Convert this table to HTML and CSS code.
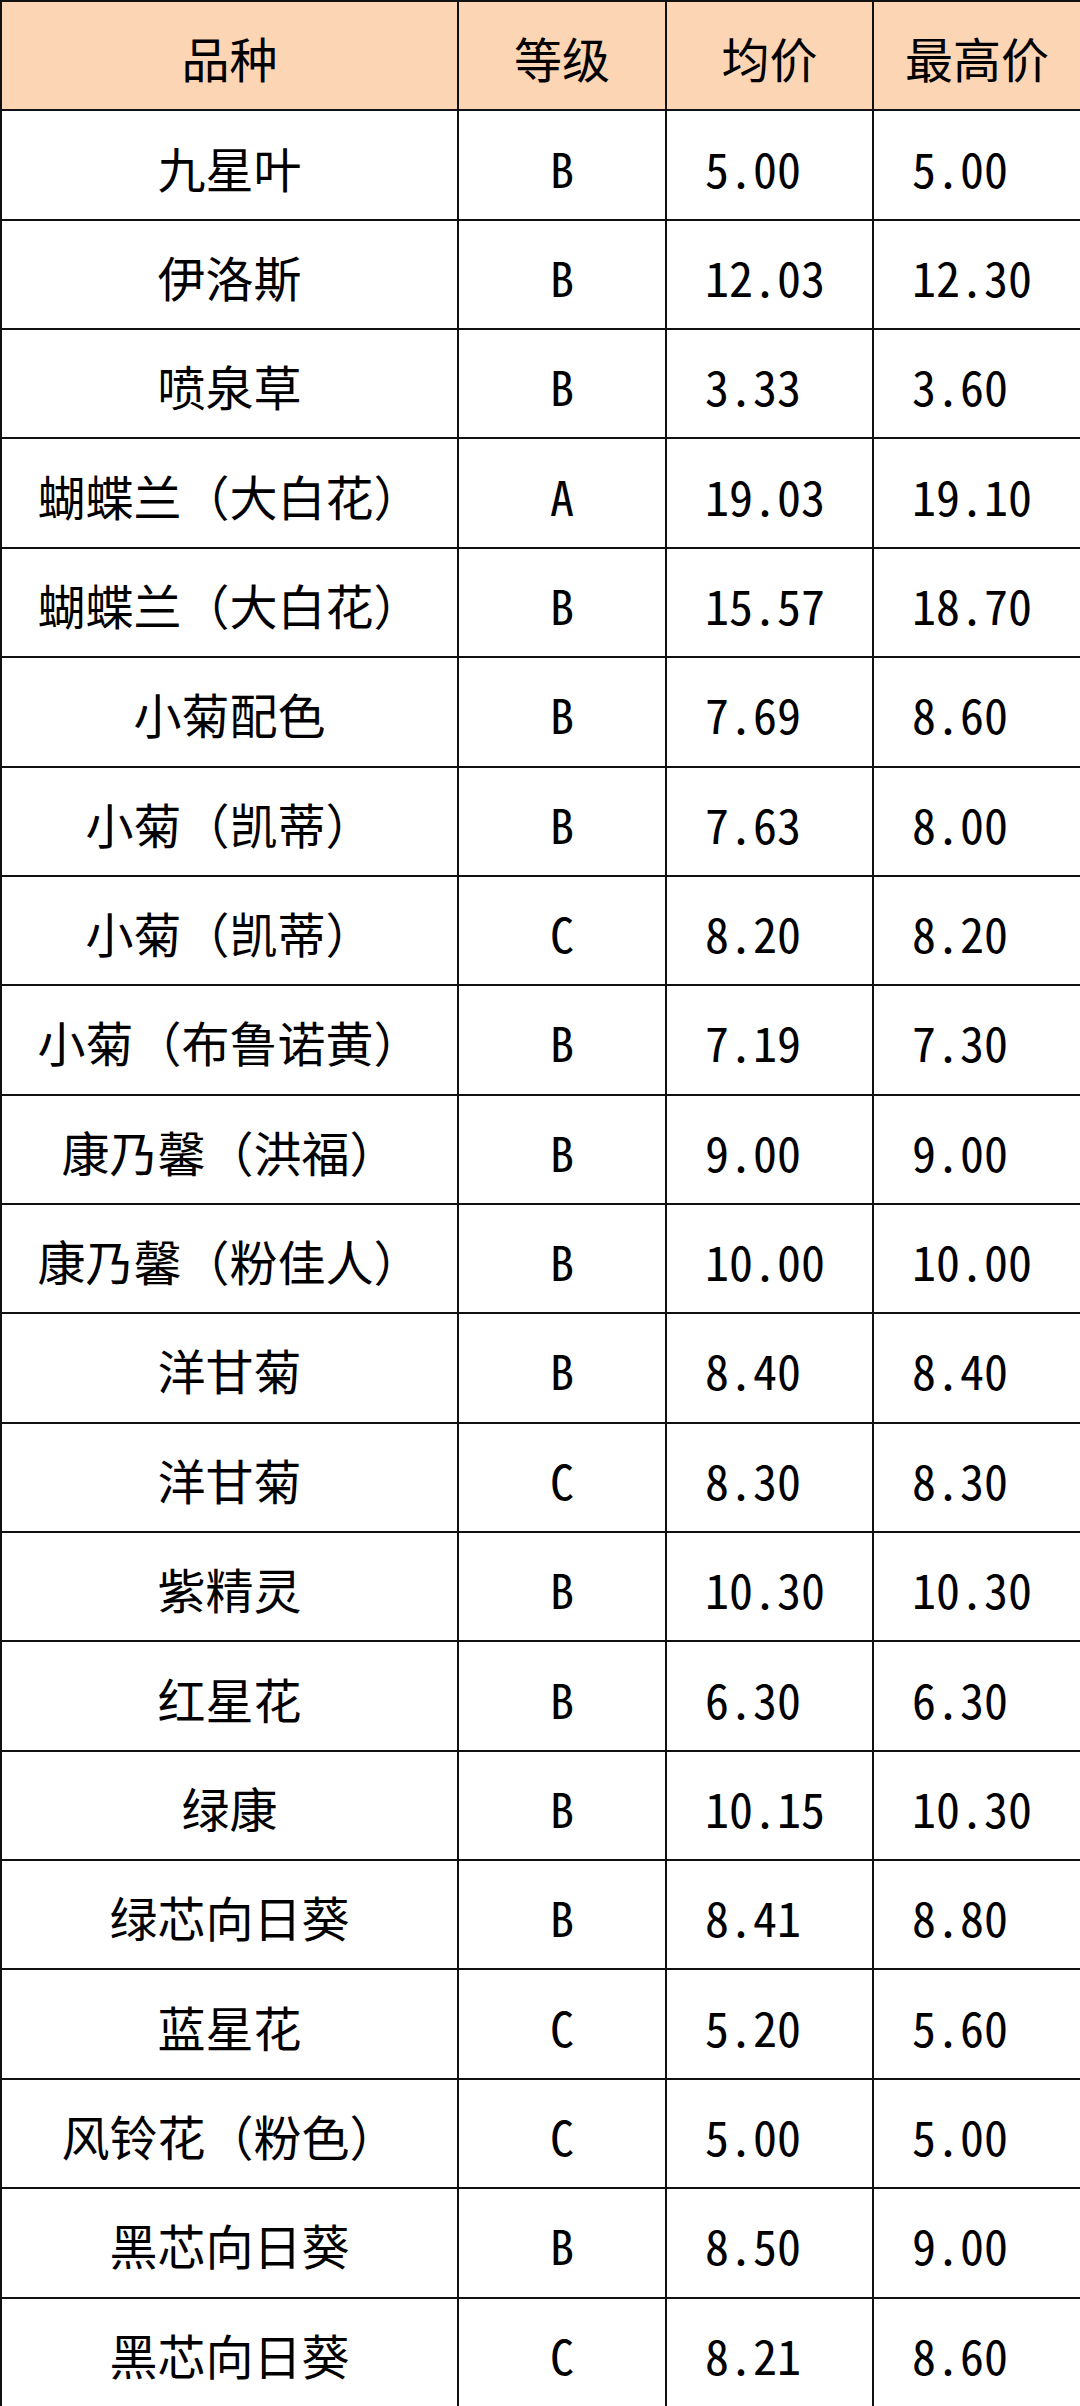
FILE: index.html
```html
<!DOCTYPE html>
<html lang="zh-CN">
<head>
<meta charset="utf-8">
<title>花卉价格</title>
<link rel="stylesheet" href="styles.css">
</head>
<body>
<table class="price-table">
  <colgroup>
    <col class="c-name"><col class="c-grade"><col class="c-avg"><col class="c-max">
  </colgroup>
  <thead>
    <tr><th>品种</th><th>等级</th><th>均价</th><th>最高价</th></tr>
  </thead>
  <tbody>
    <tr><td>九星叶</td><td class="num">B</td><td class="num price">5.00</td><td class="num price">5.00</td></tr>
    <tr><td>伊洛斯</td><td class="num">B</td><td class="num price">12.03</td><td class="num price">12.30</td></tr>
    <tr><td>喷泉草</td><td class="num">B</td><td class="num price">3.33</td><td class="num price">3.60</td></tr>
    <tr><td>蝴蝶兰（大白花）</td><td class="num">A</td><td class="num price">19.03</td><td class="num price">19.10</td></tr>
    <tr><td>蝴蝶兰（大白花）</td><td class="num">B</td><td class="num price">15.57</td><td class="num price">18.70</td></tr>
    <tr><td>小菊配色</td><td class="num">B</td><td class="num price">7.69</td><td class="num price">8.60</td></tr>
    <tr><td>小菊（凯蒂）</td><td class="num">B</td><td class="num price">7.63</td><td class="num price">8.00</td></tr>
    <tr><td>小菊（凯蒂）</td><td class="num">C</td><td class="num price">8.20</td><td class="num price">8.20</td></tr>
    <tr><td>小菊（布鲁诺黄）</td><td class="num">B</td><td class="num price">7.19</td><td class="num price">7.30</td></tr>
    <tr><td>康乃馨（洪福）</td><td class="num">B</td><td class="num price">9.00</td><td class="num price">9.00</td></tr>
    <tr><td>康乃馨（粉佳人）</td><td class="num">B</td><td class="num price">10.00</td><td class="num price">10.00</td></tr>
    <tr><td>洋甘菊</td><td class="num">B</td><td class="num price">8.40</td><td class="num price">8.40</td></tr>
    <tr><td>洋甘菊</td><td class="num">C</td><td class="num price">8.30</td><td class="num price">8.30</td></tr>
    <tr><td>紫精灵</td><td class="num">B</td><td class="num price">10.30</td><td class="num price">10.30</td></tr>
    <tr><td>红星花</td><td class="num">B</td><td class="num price">6.30</td><td class="num price">6.30</td></tr>
    <tr><td>绿康</td><td class="num">B</td><td class="num price">10.15</td><td class="num price">10.30</td></tr>
    <tr><td>绿芯向日葵</td><td class="num">B</td><td class="num price">8.41</td><td class="num price">8.80</td></tr>
    <tr><td>蓝星花</td><td class="num">C</td><td class="num price">5.20</td><td class="num price">5.60</td></tr>
    <tr><td>风铃花（粉色）</td><td class="num">C</td><td class="num price">5.00</td><td class="num price">5.00</td></tr>
    <tr><td>黑芯向日葵</td><td class="num">B</td><td class="num price">8.50</td><td class="num price">9.00</td></tr>
    <tr><td>黑芯向日葵</td><td class="num">C</td><td class="num price">8.21</td><td class="num price">8.60</td></tr>
  </tbody>
</table>
</body>
</html>
```
FILE: styles.css
```css
html, body {
  margin: 0;
  padding: 0;
  background: #ffffff;
}

.price-table {
  width: 1080px;
  height: 2406px;
  border-collapse: collapse;
  table-layout: fixed;
  font-family: "Noto Sans CJK SC", "Noto Sans", sans-serif;
  font-size: 48px;
  color: #000000;
}

.c-name { width: 457px; }
.c-grade { width: 208px; }
.c-avg { width: 207px; }
.c-max { width: 208px; }

.price-table th,
.price-table td {
  border: 2px solid #111111;
  padding: 3px 0 0 0;
  text-align: center;
  vertical-align: middle;
  font-weight: 400;
  line-height: 1;
  white-space: nowrap;
}

.price-table thead th {
  background: #fcd5b4;
}

.price-table tr {
  height: 109.36px;
}

.num {
  font-feature-settings: "hwid" 1;
}

.price-table td.price {
  text-align: left;
  padding-left: 38px;
}
```
